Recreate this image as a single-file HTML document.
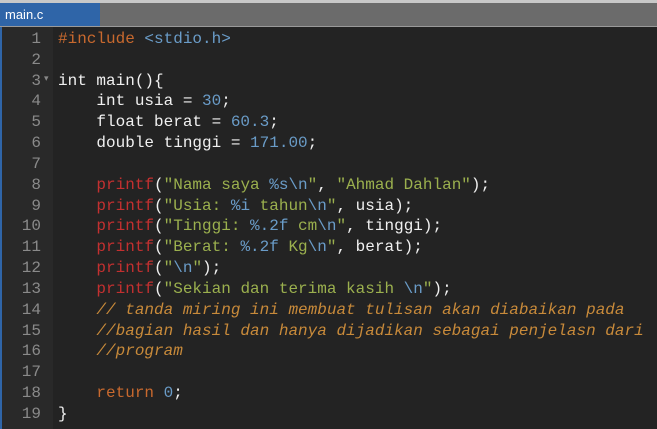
<!DOCTYPE html>
<html><head><meta charset="utf-8"><style>
html,body{margin:0;padding:0;width:657px;height:429px;overflow:hidden;background:#232323}
.top{position:absolute;left:0;top:0;width:657px;height:3px;background:#c8c8c8}
.tabs{position:absolute;left:0;top:3px;width:657px;height:24px;background:#6b6b6b;border-bottom:1px solid #9a9a9a;box-sizing:border-box}
.tab{position:absolute;left:0;top:0;width:100px;height:23px;background:#2f65a8;color:#fff;font:13px "Liberation Sans",sans-serif;line-height:23px;padding-left:5px;box-sizing:border-box}
.gut{position:absolute;left:0;top:27px;width:53px;height:402px;background:#292929;border-left:2px solid #2f65a8;box-sizing:border-box}
.ln{position:absolute;left:0;top:29px;width:41px;text-align:right;color:#8a8a8a;font:16px "Liberation Mono",monospace;line-height:20.83px;white-space:pre}
.code{position:absolute;left:58px;top:29px;color:#f0f0f0;font:16px "Liberation Mono",monospace;line-height:20.83px;white-space:pre}
.k{color:#c8692e}.n{color:#6a9cc8}.f{color:#c33030}.s{color:#9bb04e}.e{color:#6a9cc8}.c{color:#c88a3a;font-style:italic}
.fold{position:absolute;left:44px;top:73px;color:#888;font:9px sans-serif}
</style></head><body>
<div class="top"></div>
<div class="tabs"><div class="tab">main.c</div></div>
<div class="gut"></div>
<div class="fold">▾</div>
<div class="ln">1
2
3
4
5
6
7
8
9
10
11
12
13
14
15
16
17
18
19</div>
<div class="code"><span class="k">#include</span> <span class="n">&lt;stdio.h&gt;</span>

int main(){
    int usia = <span class="n">30</span>;
    float berat = <span class="n">60.3</span>;
    double tinggi = <span class="n">171.00</span>;

    <span class="f">printf</span>(<span class="s">"Nama saya </span><span class="e">%s\n</span><span class="s">"</span>, <span class="s">"Ahmad Dahlan"</span>);
    <span class="f">printf</span>(<span class="s">"Usia: </span><span class="e">%i</span><span class="s"> tahun</span><span class="e">\n</span><span class="s">"</span>, usia);
    <span class="f">printf</span>(<span class="s">"Tinggi: </span><span class="e">%.2f</span><span class="s"> cm</span><span class="e">\n</span><span class="s">"</span>, tinggi);
    <span class="f">printf</span>(<span class="s">"Berat: </span><span class="e">%.2f</span><span class="s"> Kg</span><span class="e">\n</span><span class="s">"</span>, berat);
    <span class="f">printf</span>(<span class="s">"</span><span class="e">\n</span><span class="s">"</span>);
    <span class="f">printf</span>(<span class="s">"Sekian dan terima kasih </span><span class="e">\n</span><span class="s">"</span>);
    <span class="c">// tanda miring ini membuat tulisan akan diabaikan pada</span>
    <span class="c">//bagian hasil dan hanya dijadikan sebagai penjelasn dari</span>
    <span class="c">//program</span>

    <span class="k">return</span> <span class="n">0</span>;
}</div>
</body></html>
